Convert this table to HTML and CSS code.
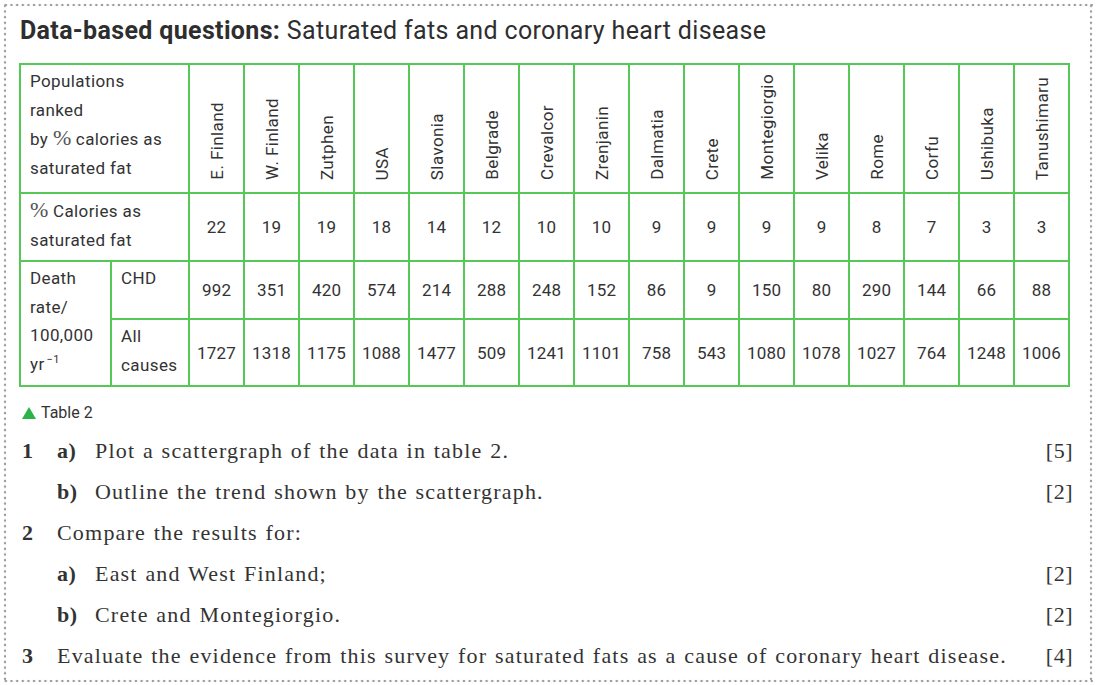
FILE: index.html
```html
<!DOCTYPE html>
<html lang="en">
<head>
<meta charset="utf-8">
<title>Data-based questions</title>
<link rel="stylesheet" href="styles.css">
</head>
<body>
<div class="frame">
  <h1 class="title"><b>Data-based questions:</b> Saturated fats and coronary heart disease</h1>
  <table class="data">
    <colgroup>
      <col class="c1"><col class="c2">
      <col class="cn"><col class="cn"><col class="cn"><col class="cn"><col class="cn"><col class="cn"><col class="cn"><col class="cn">
      <col class="cn"><col class="cn"><col class="cn"><col class="cn"><col class="cn"><col class="cn"><col class="cn"><col class="cn">
    </colgroup>
    <tr class="r-head">
      <th colspan="2" class="label">Populations<br>ranked<br>by <span class="pct">%</span> calories as<br>saturated fat</th>
      <th class="vert"><span>E. Finland</span></th>
      <th class="vert"><span>W. Finland</span></th>
      <th class="vert"><span>Zutphen</span></th>
      <th class="vert"><span>USA</span></th>
      <th class="vert"><span>Slavonia</span></th>
      <th class="vert"><span>Belgrade</span></th>
      <th class="vert"><span>Crevalcor</span></th>
      <th class="vert"><span>Zrenjanin</span></th>
      <th class="vert"><span>Dalmatia</span></th>
      <th class="vert"><span>Crete</span></th>
      <th class="vert"><span>Montegiorgio</span></th>
      <th class="vert"><span>Velika</span></th>
      <th class="vert"><span>Rome</span></th>
      <th class="vert"><span>Corfu</span></th>
      <th class="vert"><span>Ushibuka</span></th>
      <th class="vert"><span>Tanushimaru</span></th>
    </tr>
    <tr class="r-pct">
      <th colspan="2" class="label"><span class="pct">%</span> Calories as<br>saturated fat</th>
      <td>22</td><td>19</td><td>19</td><td>18</td><td>14</td><td>12</td><td>10</td><td>10</td>
      <td>9</td><td>9</td><td>9</td><td>9</td><td>8</td><td>7</td><td>3</td><td>3</td>
    </tr>
    <tr class="r-chd">
      <th rowspan="2" class="label">Death<br>rate/<br>100,000<br>yr<sup>−1</sup></th>
      <th class="label">CHD</th>
      <td>992</td><td>351</td><td>420</td><td>574</td><td>214</td><td>288</td><td>248</td><td>152</td>
      <td>86</td><td>9</td><td>150</td><td>80</td><td>290</td><td>144</td><td>66</td><td>88</td>
    </tr>
    <tr class="r-all">
      <th class="label">All<br>causes</th>
      <td>1727</td><td>1318</td><td>1175</td><td>1088</td><td>1477</td><td>509</td><td>1241</td><td>1101</td>
      <td>758</td><td>543</td><td>1080</td><td>1078</td><td>1027</td><td>764</td><td>1248</td><td>1006</td>
    </tr>
  </table>
  <p class="caption"><span class="tri"></span>Table 2</p>
  <div class="questions">
    <span class="num">1</span><span class="part">a)</span><span class="text">Plot a scattergraph of the data in table 2.</span><span class="marks">[5]</span>
    <span class="num"></span><span class="part">b)</span><span class="text">Outline the trend shown by the scattergraph.</span><span class="marks">[2]</span>
    <span class="num">2</span><span class="text wide">Compare the results for:</span><span class="marks"></span>
    <span class="num"></span><span class="part">a)</span><span class="text">East and West Finland;</span><span class="marks">[2]</span>
    <span class="num"></span><span class="part">b)</span><span class="text">Crete and Montegiorgio.</span><span class="marks">[2]</span>
    <span class="num">3</span><span class="text wide">Evaluate the evidence from this survey for saturated fats as a cause of coronary heart disease.</span><span class="marks">[4]</span>
  </div>
</div>
</body>
</html>
```

FILE: styles.css
```css
html, body {
  margin: 0;
  padding: 0;
  background: #ffffff;
}

body {
  width: 1097px;
  height: 685px;
  overflow: hidden;
}

.frame {
  box-sizing: border-box;
  margin: 3px 0 0 3px;
  width: 1090px;
  height: 680px;
  padding: 14px 0 0 16px;
  color: #333333;
  background:
    radial-gradient(circle, #9c9c9c 1.1px, transparent 1.6px) left top / 5.67px 4px repeat-x,
    radial-gradient(circle, #9c9c9c 1.1px, transparent 1.6px) left bottom / 5.67px 4px repeat-x,
    radial-gradient(circle, #9c9c9c 1.1px, transparent 1.6px) left top / 4px 5.67px repeat-y,
    radial-gradient(circle, #9c9c9c 1.1px, transparent 1.6px) right top / 4px 5.67px repeat-y;
}

.title {
  margin: 0 0 0 1px;
  font-family: Roboto, "Liberation Sans", sans-serif;
  font-size: 25px;
  letter-spacing: 0.35px;
  font-weight: 400;
  line-height: 28px;
  color: #2e2e2e;
}

.title b {
  font-weight: 700;
}

.data {
  margin-top: 18px;
  border-collapse: collapse;
  table-layout: fixed;
  width: 1049px;
  font-family: Roboto, "Liberation Sans", sans-serif;
  font-size: 17px;
  letter-spacing: 0.4px;
  color: #333333;
}

.data col.c1 { width: 91px; }
.data col.c2 { width: 78px; }
.data col.cn { width: 55px; }

.data th,
.data td {
  border: 2px solid #55c855;
  padding: 0;
  font-weight: 400;
}

.data td {
  text-align: center;
  vertical-align: middle;
  letter-spacing: 0.2px;
}

.data .label {
  text-align: left;
  vertical-align: top;
  line-height: 28.5px;
  padding: 2px 2px 0 9px;
}

.r-head { height: 129px; }
.r-pct { height: 68px; }
.r-chd { height: 58px; }
.r-all { height: 67px; }

.pct {
  font-family: "Liberation Serif", serif;
  font-size: 22px;
  color: #555555;
  letter-spacing: 0;
}

.data sup {
  font-size: 11px;
  vertical-align: 7px;
  line-height: 0;
  margin-left: 2px;
}

.vert {
  vertical-align: bottom;
  text-align: center;
  padding-bottom: 8px !important;
}

.vert span {
  display: inline-block;
  writing-mode: vertical-rl;
  transform: rotate(180deg);
  line-height: 20px;
}

.caption {
  margin: 16px 0 0 3px;
  display: flex;
  align-items: center;
  gap: 5px;
  font-family: Roboto, "Liberation Sans", sans-serif;
  font-size: 16px;
  line-height: 20px;
  color: #333333;
}

.tri {
  width: 0;
  height: 0;
  border-left: 7px solid transparent;
  border-right: 7px solid transparent;
  border-bottom: 12px solid #2bb34a;
}

.questions {
  margin-top: 7px;
  display: grid;
  grid-template-columns: 38px 38px 1fr auto;
  grid-auto-rows: 41px;
  align-items: center;
  width: 1054px;
  font-family: "Liberation Serif", serif;
  font-size: 22px;
  letter-spacing: 1.2px;
  word-spacing: 1px;
  color: #333333;
}

.num {
  font-weight: 700;
  padding-left: 3px;
}

.part {
  font-weight: 700;
  letter-spacing: 0.5px;
}

.text.wide {
  grid-column: 2 / 4;
}

.marks {
  text-align: right;
  letter-spacing: 0.5px;
}
```
